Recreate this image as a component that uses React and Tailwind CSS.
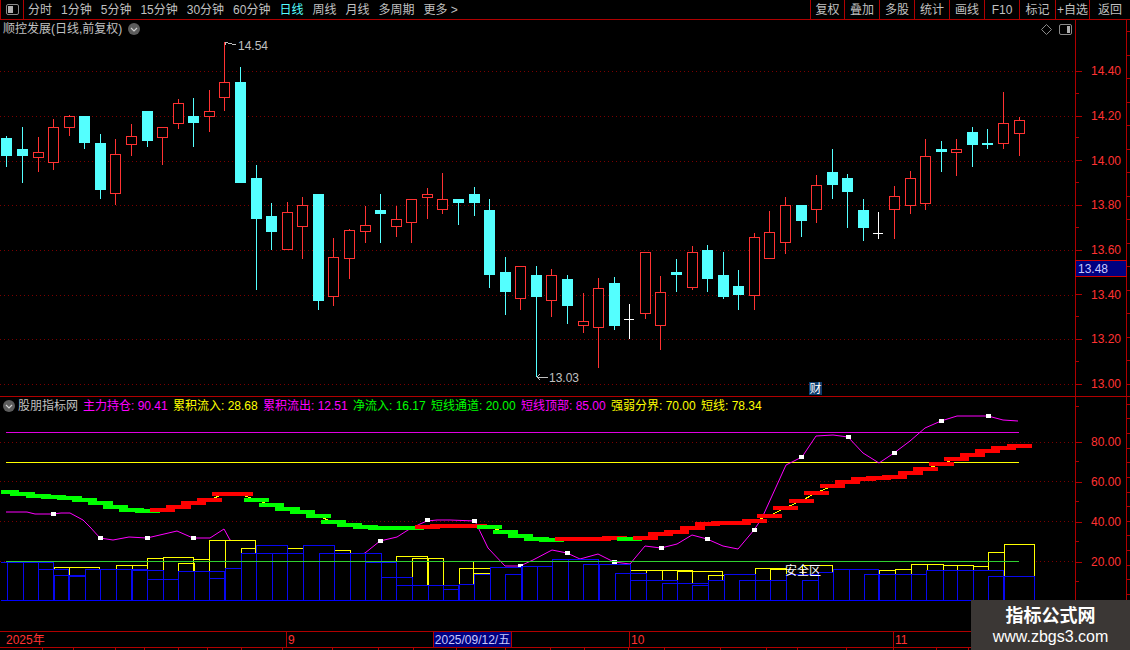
const FONT = '[font-family:"Liberation_Sans","Noto_Sans_CJK_SC",sans-serif]'

const CYAN = '#54ffff'
const RED = '#ff3232'
const xOf = i => Math.ceil(1 + i * 15.57) + 5

// [kind, wickTop, bodyTop, bodyBottom, wickBottom]  u=red hollow, d=cyan solid, w=white doji
const candles = [
  ['d',136,138,156,167],['d',127,149,156,183],['u',137,152,157,172],['u',119,127,162,170],['u',115,116,127,136],
  ['d',116,116,143,149],['d',134,143,190,199],['u',139,154,193,205],['u',124,136,144,156],['d',111,111,141,147],
  ['u',127,127,137,165],['u',99,103,123,129],['d',98,116,123,147],['u',90,111,116,132],['u',42,82,97,111],
  ['d',67,82,183,183],['d',165,178,219,290],['d',203,216,232,250],['u',202,212,249,250],['u',197,205,226,259],
  ['d',194,194,301,310],['u',238,257,296,306],['u',229,230,258,279],['u',206,225,231,243],['d',194,210,214,243],
  ['u',206,219,226,237],['u',199,199,222,243],['u',188,194,197,219],['u',173,199,209,214],['d',199,199,203,225],
  ['d',187,194,203,216],['d',199,210,275,288],['d',257,272,292,315],['u',266,266,298,310],['d',266,275,297,377],
  ['u',269,275,300,317],['d',275,279,306,324],['u',293,321,325,333],['u',278,288,327,368],['d',277,283,326,330],
  ['w',304,319,319,339],['u',252,252,313,319],['u',276,292,325,350],['d',259,272,275,292],['u',246,252,287,290],
  ['d',245,250,279,292],['d',252,275,297,299],['d',270,286,295,310],['u',233,237,295,310],['u',211,232,258,258],
  ['u',197,205,242,254],['d',205,205,221,237],['u',175,185,209,223],['d',149,172,185,199],['d',174,178,192,228],
  ['d',199,210,228,241],['w',212,233,233,239],['u',186,196,209,239],['u',171,178,205,214],['u',139,156,203,210],
  ['d',141,149,152,172],['u',139,149,152,176],['d',127,132,145,167],['d',129,143,145,149],['u',92,123,143,149],
  ['u',117,120,133,156],
]

// top of the thick 短线 block per bar, g=green r=red
const band = [
  [490,'g'],[492,'g'],[494,'g'],[495,'g'],[496,'g'],[498,'g'],[501,'g'],[505,'g'],[508,'g'],[509,'g'],
  [508,'r'],[505,'r'],[501,'r'],[498,'r'],[492,'r'],[492,'r'],[498,'g'],[503,'g'],[507,'g'],[510,'g'],
  [514,'g'],[520,'g'],[523,'g'],[525,'g'],[526,'g'],[526,'g'],[526,'g'],[525,'r'],[524,'r'],[524,'r'],
  [524,'r'],[525,'g'],[530,'g'],[534,'g'],[537,'g'],[538,'g'],[537,'r'],[537,'r'],[537,'r'],[536,'r'],
  [537,'g'],[536,'r'],[532,'r'],[530,'r'],[526,'r'],[522,'r'],[521,'r'],[521,'r'],[519,'r'],[514,'r'],
  [506,'r'],[499,'r'],[491,'r'],[484,'r'],[480,'r'],[477,'r'],[476,'r'],[475,'r'],[471,'r'],[467,'r'],
  [462,'r'],[457,'r'],[453,'r'],[449,'r'],[446,'r'],[444,'r'],
]

const magenta = [
  [6,512],[27,512],[35,514],[53,514],[61,513],[70,513],[83,520],[90,527],[100,538],[113,540],[129,537],[147,538],
  [177,531],[193,538],[210,538],[224,529],[230,540],[300,575],[365,553],[380,541],[397,537],[408,530],[420,524],
  [427,521],[437,520],[450,520],[475,521],[488,548],[505,566],[520,566],[533,560],[552,550],[567,553],[580,559],
  [598,554],[614,562],[630,564],[645,546],[661,548],[677,544],[692,535],[707,539],[723,546],[738,549],[754,530],
  [762,518],[786,465],[802,457],[816,436],[833,435],[848,437],[863,453],[879,463],[894,453],[910,441],[925,428],
  [941,421],[957,416],[988,416],[1003,420],[1018,421],
]
const markers = [[53,514],[100,538],[147,538],[193,538],[380,541],[427,520],[474,521],[520,566],[567,553],[614,562],[661,548],[707,539],[754,530],[801,457],[848,437],[894,453],[941,421],[988,416]]

// [left, right, top] rectangles that stand on the baseline
const yellowBars = [
  [54,99,567],[69,99,567],[116,147,565],[132,147,565],[147,163,558],[163,193,557],[193,209,559],[178,194,563],
  [209,255,540],[225,255,540],[241,256,548],[287,303,548],[334,350,550],[396,427,556],[412,443,558],[428,443,558],
  [459,490,568],[473,490,568],[474,490,573],[630,692,570],[646,692,570],[662,692,570],[677,722,571],[692,722,571],
  [708,724,575],[755,786,568],[770,786,569],[802,832,565],[879,895,570],[895,911,569],[911,927,564],[927,943,564],
  [943,957,565],[957,973,565],[973,988,566],[988,1004,552],[1004,1034,544],
]
const blueBars = [
  [7,53,562],[23,38,562],[38,68,569],[54,85,575],[69,85,576],[85,116,569],[100,131,569],[116,147,569],
  [132,163,570],[147,178,579],[163,178,579],[178,209,571],[194,224,571],[209,224,578],[225,241,568],[241,272,553],
  [256,287,545],[272,303,553],[287,303,553],[303,334,545],[319,350,553],[334,365,553],[350,381,553],[365,396,562],
  [381,412,577],[396,458,585],[412,428,585],[428,443,585],[443,458,589],[459,474,584],[474,490,574],[490,522,567],
  [505,521,574],[521,552,566],[537,552,566],[552,598,559],[568,598,559],[583,630,564],[599,630,564],[615,646,573],
  [630,677,580],[646,677,580],[662,708,583],[677,708,583],[692,708,585],[708,724,580],[724,755,574],[739,770,580],
  [755,786,580],[770,786,580],[786,818,574],[802,818,580],[818,833,572],[833,878,569],[849,878,569],[864,926,574],
  [879,926,574],[895,926,574],[911,926,574],[926,1003,570],[943,1003,570],[957,1003,570],[973,1003,570],[988,1034,576],[1004,1034,576],
]

const mainTicks = [71, 116, 161, 205, 250, 295, 339, 384]
const subTicks = [442, 481, 521, 561]
const toolbarLeft = ['分时', '1分钟', '5分钟', '15分钟', '30分钟', '60分钟', '日线', '周线', '月线', '多周期', '更多 >']
const toolbarRight = [['复权',34],['叠加',35],['多股',35],['统计',35],['画线',35],['F10',35],['标记',36],['+自选',34],['返回',41]]
const legend = [
  ['主力持仓: 90.41', 'text-[#ff00ff]'], ['累积流入: 28.68', 'text-[#ffff00]'], ['累积流出: 12.51', 'text-[#ff00ff]'],
  ['净流入: 16.17', 'text-[#00ff00]'], ['短线通道: 20.00', 'text-[#00ff00]'], ['短线顶部: 85.00', 'text-[#ff00ff]'],
  ['强弱分界: 70.00', 'text-[#ffff00]'], ['短线: 78.34', 'text-[#ffff00]'],
]

function Candle({ c, i }) {
  const [kind, top, bTop, bBot, bot] = c
  const x = xOf(i)
  const color = kind === 'u' ? RED : kind === 'd' ? CYAN : '#ffffff'
  return (
    <g>
      <rect x={x} y={top} width="1" height={Math.max(bTop - top, 0)} fill={color} />
      <rect x={x} y={bBot} width="1" height={Math.max(bot - bBot, 0)} fill={color} />
      {kind === 'u' && <rect x={x - 4.5} y={bTop + 0.5} width="10" height={bBot - bTop} fill="#000" stroke={color} />}
      {kind === 'd' && <rect x={x - 5} y={bTop} width="11" height={Math.max(bBot - bTop, 2)} fill={color} />}
      {kind === 'w' && <rect x={x - 5} y={bTop} width="10" height="1" fill={color} />}
    </g>
  )
}

function Grid({ ys, to = 1075 }) {
  return ys.map(y => <line key={y} x1="0" x2={to} y1={y + 0.5} y2={y + 0.5} stroke="#7a0000" strokeDasharray="1 3" />)
}

function MainChart() {
  return (
    <svg viewBox="0 20 1075 376" className="block w-[1075px] h-[376px]" shapeRendering="crispEdges">
      <Grid ys={mainTicks} />
      {candles.map((c, i) => <Candle key={i} c={c} i={i} />)}
      <g stroke="#c0c0c0" fill="none">
        <path d="M225 42H228M225 42V45M228 43L236 45" />
        <path d="M537 377H548M537 377L540 374M537 377L540 380" />
      </g>
    </svg>
  )
}

function SubChart() {
  const yellowLine = band.map((b, i) => `${xOf(i)},${b[0] + 2}`).join(' ')
  return (
    <svg viewBox="0 397 1075 234" className="block w-[1075px] h-[234px]" shapeRendering="crispEdges">
      <Grid ys={subTicks} />
      <line x1="6" x2="1019" y1="432.5" y2="432.5" stroke="#e000e0" />
      <line x1="6" x2="1019" y1="462.5" y2="462.5" stroke="#ffff00" />
      <polyline points={magenta.map(p => p.join(',')).join(' ')} fill="none" stroke="#ff00ff" shapeRendering="auto" />
      {markers.map(([x, y]) => <rect key={x} x={x - 2} y={y - 2} width="5" height="4" fill="#fff" />)}
      <polyline points={yellowLine} fill="none" stroke="#ffff00" />
      {band.map(([y, c], i) => {
        const left = Math.max(xOf(i) - 12, 1)
        return <rect key={i} x={left} y={y} width={xOf(i) + 13 - left} height="4" fill={c === 'g' ? '#00ff00' : '#ff0000'} />
      })}
      {yellowBars.map(([a, b, t], i) => <rect key={i} x={a} y={t} width={b - a} height={600 - t} fill="#000" />)}
      {yellowBars.map(([a, b, t], i) => <rect key={i} x={a + 0.5} y={t + 0.5} width={b - a} height={600 - t} fill="none" stroke="#ffff00" />)}
      <line x1="473.5" x2="473.5" y1="561" y2="568" stroke="#ffff00" />
      {blueBars.map(([a, b, t], i) => <rect key={i} x={a} y={t} width={b - a} height={600 - t} fill="#000" />)}
      {blueBars.map(([a, b, t], i) => <rect key={i} x={a + 0.5} y={t + 0.5} width={b - a} height={600 - t} fill="none" stroke="#0808f0" />)}
      <line x1="1" x2="7" y1="562.5" y2="562.5" stroke="#0808f0" />
      <line x1="1" x2="1035" y1="600.5" y2="600.5" stroke="#0000ff" />
      <line x1="6" x2="1019" y1="561.5" y2="561.5" stroke="#30d030" />
    </svg>
  )
}

function Axis({ labels, rowClass, padClass, children }) {
  return (
    <div className="relative w-[55px] flex">
      <div className={`w-[52px] border-x border-[#b00000] ${padClass}`}>
        {labels.map(l => (
          <div key={l} className={`relative flex items-center ${rowClass}`}>
            <span className="w-[6px] h-px bg-[#b00000]" />
            <span className="ml-[9px] text-[12px] text-[#ff3232]">{l}</span>
            <span className="absolute left-0 bottom-0 w-[3px] h-px bg-[#b00000]" />
          </div>
        ))}
      </div>
      <div className="flex-1 flex flex-col justify-around">
        {[0, 1, 2, 3, 4, 5, 6, 7, 8, 9, 10, 11, 12, 13, 14, 15].map(n => (
          <span key={n} className="h-px bg-[#b00000]" />
        ))}
      </div>
      {children}
    </div>
  )
}

function PanelIcon({ side }) {
  return (
    <svg width="13" height="11" viewBox="0 0 13 11">
      <rect x="0.5" y="0.5" width="12" height="10" rx="1.5" fill="none" stroke="#8a8a8a" />
      <rect x={side === 'left' ? 2 : 8} y="2" width={side === 'left' ? 5 : 3} height="7" fill="#b0b0b0" />
    </svg>
  )
}

function Chevron() {
  return (
    <svg width="12" height="12" viewBox="0 0 12 12" className="shrink-0">
      <circle cx="6" cy="6" r="6" fill="#5c5c5c" />
      <path d="M3 5L6 8L9 5" fill="none" stroke="#d0d0d0" strokeWidth="1.2" />
    </svg>
  )
}

function DateTicks({ marks, className, height }) {
  return (
    <svg width="1130" height={height} className={className} shapeRendering="crispEdges">
      {marks.map(x => <line key={x} x1={x + 0.5} x2={x + 0.5} y1="0" y2={height} stroke="#b00000" />)}
    </svg>
  )
}

export default function App() {
  return (
    <div className={`relative w-[1130px] h-[650px] bg-black overflow-hidden flex flex-col text-[12px] leading-none ${FONT}`}>
      <div className="h-[20px] shrink-0 flex border-b border-[#b00000] text-[#c0c0c0]">
        <div className="w-[24px] flex items-center justify-center border-x border-[#b00000]">
          <PanelIcon side="left" />
        </div>
        <div className="flex-1 flex items-center gap-[9px] pl-[4px]">
          {toolbarLeft.map(t => <span key={t} className={t === '日线' ? 'text-[#54ffff]' : ''}>{t}</span>)}
        </div>
        {toolbarRight.map(([t, w]) => (
          <span key={t} style={{ width: w }} className="flex items-center justify-center border-l border-[#b00000] whitespace-nowrap">{t}</span>
        ))}
      </div>

      <div className="h-[376px] shrink-0 flex">
        <div className="relative w-[1075px]">
          <MainChart />
          <div className="absolute left-[3px] top-[3px] flex items-center gap-[6px] text-[#c0c0c0] h-[12px]">
            <span>顺控发展(日线,前复权)</span>
            <Chevron />
          </div>
          <div className="absolute right-[3px] top-[4px] flex items-center gap-[7px]">
            <svg width="11" height="11" viewBox="0 0 11 11"><path d="M5.5 0.5L10.5 5.5L5.5 10.5L0.5 5.5Z" fill="none" stroke="#8a8a8a" /></svg>
            <PanelIcon side="right" />
          </div>
          <span className="absolute left-[238px] top-[20px] text-[#c0c0c0]">14.54</span>
          <span className="absolute left-[549px] top-[352px] text-[#c0c0c0]">13.03</span>
          <span className="absolute left-[809px] top-[362px] w-[13px] h-[13px] bg-[#0c3c6c] text-white flex items-center justify-center">财</span>
        </div>
        <Axis
          labels={['14.40', '14.20', '14.00', '13.80', '13.60', '13.40', '13.20', '13.00']}
          rowClass="h-[44.7px]"
          padClass="pt-[29px]"
        >
          <div className="absolute left-0 top-[240px] w-[52px] h-[17px] bg-[#000080] border border-[#d00000] text-[#c8c8ff] flex items-center pl-[2px]">13.48</div>
        </Axis>
      </div>

      <div className="h-[235px] shrink-0 flex border-t border-[#b00000]">
        <div className="relative w-[1075px]">
          <SubChart />
          <div className="absolute left-[3px] top-[3px] h-[12px] flex items-center whitespace-nowrap">
            <Chevron />
            <span className="ml-[3px] mr-[5px] text-[#c0c0c0]">股朋指标网</span>
            <div className="flex gap-[5.3px]">
              {legend.map(([t, c]) => <span key={t} className={c}>{t}</span>)}
            </div>
          </div>
          <span className="absolute left-[785px] top-[168px] text-white">安全区</span>
        </div>
        <Axis labels={['80.00', '60.00', '40.00', '20.00']} rowClass="h-[40px]" padClass="pt-[25px]" />
      </div>

      <div className="relative h-[17px] shrink-0 border-y border-[#b00000] text-[#ff3232] flex items-center">
        <DateTicks marks={[286, 629, 893]} height={15} className="absolute left-0 top-0" />
        <span className="absolute left-[6px]">2025年</span>
        <span className="absolute left-[288px]">9</span>
        <span className="absolute left-[433px] top-0 w-[79px] h-[15px] bg-[#000080] border-x border-[#b00000] text-[#c8c8ff] flex items-center justify-center whitespace-nowrap">2025/09/12/五</span>
        <span className="absolute left-[631px]">10</span>
        <span className="absolute left-[895px]">11</span>
      </div>

      <div className="relative h-[3px] overflow-hidden">
        <DateTicks
          marks={[42, 73, 115, 144, 178, 207, 241, 282, 332, 378, 413, 456, 505, 550, 584, 628, 664, 720, 766, 797, 846, 893, 936, 968]}
          height={3}
          className="absolute left-0 top-0"
        />
      </div>

      <div className="absolute right-0 bottom-0 w-[159px] h-[50px] bg-[#3b3735] flex flex-col items-center pt-[6px] text-white">
        <span className="text-[18px] font-bold leading-[20px]">指标公式网</span>
        <span className="mt-[1px] text-[16px] leading-[20px]">www.zbgs3.com</span>
      </div>
    </div>
  )
}
